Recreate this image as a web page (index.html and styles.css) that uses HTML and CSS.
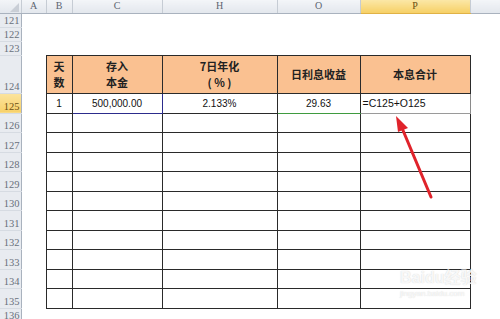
FILE: index.html
```html
<!DOCTYPE html>
<html>
<head>
<meta charset="utf-8">
<link rel="stylesheet" href="styles.css">
</head>
<body>
<div class="wrap">
<table class="sheet">
  <colgroup>
    <col class="w-rh"><col class="w-a"><col class="w-b"><col class="w-c"><col class="w-h"><col class="w-o"><col class="w-p"><col class="w-x">
  </colgroup>
  <tr class="r-ch">
    <td class="ch corner"><span class="tri"></span></td>
    <td class="ch">A</td><td class="ch">B</td><td class="ch">C</td><td class="ch">H</td><td class="ch">O</td><td class="ch sel">P</td><td class="ch"></td>
  </tr>
  <tr class="r-s"><td class="rh">121</td><td></td><td></td><td></td><td></td><td></td><td></td><td></td></tr>
  <tr class="r-s"><td class="rh">122</td><td></td><td></td><td></td><td></td><td></td><td></td><td></td></tr>
  <tr class="r-s"><td class="rh">123</td><td></td><td></td><td></td><td></td><td></td><td></td><td></td></tr>
  <tr class="r-hd">
    <td class="rh">124</td><td></td>
    <td class="g hd">天<br>数</td>
    <td class="g hd">存入<br>本金</td>
    <td class="g hd">7日年化<br>( % )</td>
    <td class="g hd">日利息收益</td>
    <td class="g hd">本息合计</td>
    <td></td>
  </tr>
  <tr class="r-a">
    <td class="rh rsel">125</td><td></td>
    <td class="g num">1</td>
    <td class="g num ref-blue">500,000.00</td>
    <td class="g num">2.133%</td>
    <td class="g num ref-green">29.63</td>
    <td class="g num active">=C125+O125</td>
    <td></td>
  </tr>
  <tr class="r-b"><td class="rh">126</td><td></td><td class="g"></td><td class="g"></td><td class="g"></td><td class="g"></td><td class="g"></td><td></td></tr>
  <tr class="r-a"><td class="rh">127</td><td></td><td class="g"></td><td class="g"></td><td class="g"></td><td class="g"></td><td class="g"></td><td></td></tr>
  <tr class="r-b"><td class="rh">128</td><td></td><td class="g"></td><td class="g"></td><td class="g"></td><td class="g"></td><td class="g"></td><td></td></tr>
  <tr class="r-a"><td class="rh">129</td><td></td><td class="g"></td><td class="g"></td><td class="g"></td><td class="g"></td><td class="g"></td><td></td></tr>
  <tr class="r-b"><td class="rh">130</td><td></td><td class="g"></td><td class="g"></td><td class="g"></td><td class="g"></td><td class="g"></td><td></td></tr>
  <tr class="r-a"><td class="rh">131</td><td></td><td class="g"></td><td class="g"></td><td class="g"></td><td class="g"></td><td class="g"></td><td></td></tr>
  <tr class="r-b"><td class="rh">132</td><td></td><td class="g"></td><td class="g"></td><td class="g"></td><td class="g"></td><td class="g"></td><td></td></tr>
  <tr class="r-a"><td class="rh">133</td><td></td><td class="g"></td><td class="g"></td><td class="g"></td><td class="g"></td><td class="g"></td><td></td></tr>
  <tr class="r-b"><td class="rh">134</td><td></td><td class="g"></td><td class="g"></td><td class="g"></td><td class="g"></td><td class="g"></td><td></td></tr>
  <tr class="r-a"><td class="rh">135</td><td></td><td class="g"></td><td class="g"></td><td class="g"></td><td class="g"></td><td class="g"></td><td></td></tr>
  <tr class="r-e"><td class="rh">136</td><td></td><td></td><td></td><td></td><td></td><td></td><td></td></tr>
</table>

<svg class="arrow" width="500" height="319" viewBox="0 0 500 319">
  <line x1="431" y1="197" x2="402" y2="128" stroke="#e0232b" stroke-width="3" stroke-linecap="round"/>
  <polygon points="396,116 408,128 398,132" fill="#e0232b"/>
</svg>

<div class="watermark">
  <div class="wm-logo">Baidu经验</div>
  <div class="wm-url">jingyan.baidu.com</div>
</div>
</div>
</body>
</html>
```

FILE: styles.css
```css
html, body {
  margin: 0;
  padding: 0;
  background: #ffffff;
}
body {
  width: 500px;
  height: 319px;
  overflow: hidden;
  font-family: "Liberation Sans", Arial, sans-serif;
}
.wrap {
  position: relative;
  width: 500px;
  height: 319px;
  overflow: hidden;
}
.sheet {
  border-collapse: collapse;
  table-layout: fixed;
  width: 500px;
}
.w-rh { width: 21px; }
.w-a { width: 25px; }
.w-b { width: 26px; }
.w-c { width: 90px; }
.w-h { width: 115px; }
.w-o { width: 83px; }
.w-p { width: 110px; }
.w-x { width: 30px; }

.sheet td {
  padding: 0;
  overflow: hidden;
  white-space: nowrap;
  font-size: 10px;
  color: #111;
}
.r-ch { height: 13px; }
.r-s { height: 14px; }
.r-hd { height: 38px; }
.r-a { height: 20px; }
.r-b { height: 19px; }
.r-e { height: 11px; }

.sheet td.ch {
  background: linear-gradient(#f3f5f8, #e3e7ed);
  border-right: 1px solid #c6ccd4;
  border-bottom: 1px solid #a9b2be;
  text-align: center;
  vertical-align: middle;
  font-family: "Liberation Serif", "DejaVu Serif", serif;
  font-size: 10px;
  color: #5c6470;
  line-height: 12px;
}
.sheet td.ch.sel {
  background: linear-gradient(#fbe7a6, #f6d066);
  color: #6a4d12;
  border-bottom-color: #e0b246;
}
.corner {
  position: relative;
}
.tri {
  position: absolute;
  right: 2px;
  bottom: 1px;
  width: 0;
  height: 0;
  border-left: 9px solid transparent;
  border-bottom: 9px solid #c9ced6;
}
.sheet td.rh {
  background: #e8ebf0;
  border-right: 1px solid #a9b2be;
  border-bottom: 1px solid #d6dbe2;
  text-align: right;
  vertical-align: bottom;
  padding-right: 1px;
  font-family: "Liberation Serif", "DejaVu Serif", serif;
  font-size: 10.5px;
  line-height: 13px;
  color: #69707b;
}
.sheet td.rh.rsel {
  background: linear-gradient(#fbe49e, #f7d16a);
  color: #6d5014;
}

.sheet td.g {
  border: 1px solid #2a2a2a;
}
.sheet td.hd {
  background: #fac191;
  font-family: "Noto Sans CJK SC", "Noto Sans", sans-serif;
  font-weight: bold;
  font-size: 11px;
  line-height: 16px;
  color: #222;
  text-align: center;
  vertical-align: middle;
}
.sheet td.num {
  text-align: center;
  vertical-align: middle;
  font-family: "Liberation Sans", Arial, sans-serif;
  font-size: 10px;
  color: #111;
}
.sheet td.ref-blue {
  border-color: #2c2c8c;
}
.sheet td.ref-green {
  border-left-color: #3f9b3f;
  border-top-color: #3f9b3f;
  border-bottom-color: #3f9b3f;
}
.sheet td.active {
  text-align: left;
  padding-left: 2px;
  border-right-color: #8a8a8a;
  border-bottom-color: #9a9a9a;
  font-size: 10.5px;
}

.arrow {
  position: absolute;
  left: 0;
  top: 0;
  pointer-events: none;
}
.watermark {
  position: absolute;
  left: 400px;
  top: 268px;
  white-space: nowrap;
  color: rgba(255, 255, 255, 0.85);
  text-shadow: 0 0 1px rgba(130, 130, 130, 0.4);
  font-family: "Liberation Sans", "Noto Sans CJK SC", sans-serif;
}
.wm-logo {
  font-size: 16px;
  font-weight: bold;
  line-height: 20px;
}
.wm-url {
  font-size: 8px;
  line-height: 12px;
}
```
